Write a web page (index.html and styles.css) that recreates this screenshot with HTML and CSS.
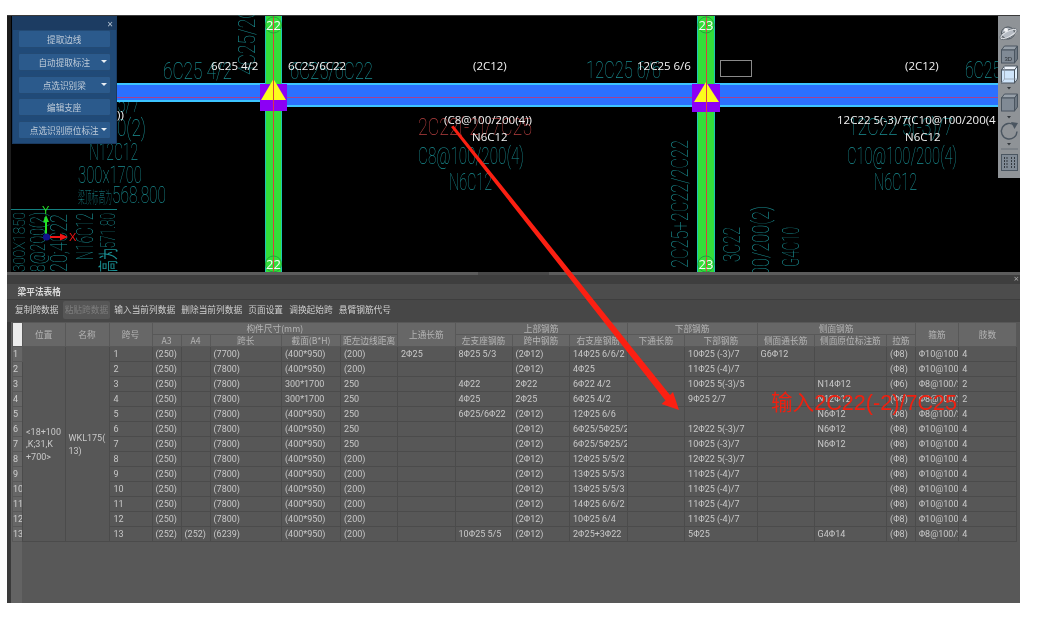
FILE: index.html
```html
<!DOCTYPE html>
<html lang="zh">
<head>
<meta charset="utf-8">
<title>梁平法表格</title>
<link rel="stylesheet" href="styles.css">
</head>
<body>
<div class="frame">
  <section class="canvas">
    <svg class="cad" viewBox="7 15 1013 257" width="1013" height="257" xmlns="http://www.w3.org/2000/svg">
      <rect x="7" y="15" width="1013" height="257" fill="#000"/>
      <rect x="7" y="15" width="1013" height="1" fill="#3a3a3a"/>
      <rect x="7" y="16" width="4" height="256" fill="#1c1c1c"/>

      <g class="teal">
        <text x="163" y="79" textLength="69" lengthAdjust="spacingAndGlyphs">6C25 4/2</text>
        <text x="290" y="79" textLength="83" lengthAdjust="spacingAndGlyphs">6C25/6C22</text>
        <text x="586" y="78" textLength="75" lengthAdjust="spacingAndGlyphs">12C25 6/6</text>
        <text x="965" y="78" textLength="36" lengthAdjust="spacingAndGlyphs">6C25</text>
        <text x="418" y="164" textLength="106" lengthAdjust="spacingAndGlyphs">C8@100/200(4)</text>
        <text x="449" y="190" textLength="43" lengthAdjust="spacingAndGlyphs">N6C12</text>
        <text x="848" y="135" textLength="105" lengthAdjust="spacingAndGlyphs">12C22 5(-3)/7</text>
        <text x="847" y="164" textLength="110" lengthAdjust="spacingAndGlyphs">C10@100/200(4)</text>
        <text x="874" y="190" textLength="43" lengthAdjust="spacingAndGlyphs">N6C12</text>
        <text x="117" y="112" textLength="23" lengthAdjust="spacingAndGlyphs">5/7</text>
        <text x="117" y="136" textLength="29" lengthAdjust="spacingAndGlyphs">0(2)</text>
        <text x="89" y="160" textLength="49" lengthAdjust="spacingAndGlyphs">N12C12</text>
        <text x="78" y="183" textLength="64" lengthAdjust="spacingAndGlyphs">300x1700</text>
        <text class="cn" x="78" y="203" textLength="34" lengthAdjust="spacingAndGlyphs">梁顶标高为</text>
        <text x="112" y="203" textLength="54" lengthAdjust="spacingAndGlyphs">568.800</text>
        <text transform="translate(255 75) rotate(-90)" textLength="66" lengthAdjust="spacingAndGlyphs">4C25/20</text>
        <text transform="translate(688 268) rotate(-90)" textLength="128" lengthAdjust="spacingAndGlyphs">2C25+2C22/2C22</text>
        <text transform="translate(740 262) rotate(-90)" textLength="35" lengthAdjust="spacingAndGlyphs">3C22</text>
        <text transform="translate(769 276) rotate(-90)" textLength="70" lengthAdjust="spacingAndGlyphs">00/200(2)</text>
        <text transform="translate(799 267) rotate(-90)" textLength="40" lengthAdjust="spacingAndGlyphs">G4C10</text>
        <text class="small" transform="translate(25 272) rotate(-90)" textLength="60" lengthAdjust="spacingAndGlyphs">300X1850</text>
        <text class="mid" transform="translate(45 272) rotate(-90)" textLength="60" lengthAdjust="spacingAndGlyphs">8@200(2)</text>
        <text transform="translate(67 272) rotate(-90)" textLength="58" lengthAdjust="spacingAndGlyphs">20;4C22</text>
        <text transform="translate(93 260) rotate(-90)" textLength="47" lengthAdjust="spacingAndGlyphs">N16C12</text>
        <text class="mid" transform="translate(115 272) rotate(-90)" textLength="59" lengthAdjust="spacingAndGlyphs">高为571.80</text>
      </g>
      <text class="brown" x="418" y="135" textLength="114" lengthAdjust="spacingAndGlyphs">2C22(-2)/7C25</text>
      <rect x="11" y="209" width="106" height="1" fill="#148080"/>

      <rect x="117" y="83" width="148" height="18" fill="#2b70ff"/>
      <rect x="282" y="83" width="716" height="24" fill="#2b70ff"/>
      <rect x="117" y="83" width="148" height="2" fill="#3cc4ff"/>
      <rect x="117" y="100" width="148" height="2" fill="#3cc4ff"/>
      <rect x="282" y="83" width="716" height="2" fill="#3cc4ff"/>
      <rect x="282" y="105" width="716" height="2" fill="#3cc4ff"/>
      <rect x="117" y="97" width="881" height="1" fill="#a8408f"/>

      <rect x="265" y="16" width="17" height="256" fill="#33dd3a"/>
      <rect x="697" y="16" width="18" height="256" fill="#33dd3a"/>
      <g fill="#1cc6b4">
        <rect x="265" y="16" width="1" height="256"/><rect x="281" y="16" width="1" height="256"/>
        <rect x="697" y="16" width="1" height="256"/><rect x="714" y="16" width="1" height="256"/>
      </g>
      <rect x="260" y="84" width="27" height="27" fill="#8c00f5"/>
      <rect x="692" y="84" width="28" height="28" fill="#8c00f5"/>
      <polygon points="273.5,79 286,100 261,100" fill="#fcfc1c"/>
      <polygon points="706,82 719,102 694,102" fill="#fcfc1c"/>
      <rect x="273" y="16" width="1" height="256" fill="#d94040"/>
      <rect x="706" y="16" width="1" height="256" fill="#d94040"/>

      <g fill="none" stroke="#1fa838">
        <circle cx="273.5" cy="25" r="8"/><circle cx="273.5" cy="264" r="8"/>
        <circle cx="706" cy="25" r="8"/><circle cx="706" cy="264" r="8"/>
      </g>
      <g class="num">
        <text x="273.5" y="30">22</text><text x="273.5" y="269">22</text>
        <text x="706" y="30">23</text><text x="706" y="269">23</text>
      </g>

      <rect x="720.500" y="60.500" width="31" height="16" fill="none" stroke="#8a8a8a"/>

      <g class="white">
        <text x="211" y="70">6C25 4/2</text>
        <text x="288" y="70">6C25/6C22</text>
        <text x="473" y="70">(2C12)</text>
        <text x="637" y="70">12C25 6/6</text>
        <text x="905" y="70">(2C12)</text>
        <text x="444" y="124">(C8@100/200(4))</text>
        <text x="472" y="141">N6C12</text>
        <text x="837" y="124">12C22 5(-3)/7(C10@100/200(4</text>
        <text x="905" y="141">N6C12</text>
        <text x="117" y="119">))</text>
      </g>

      <g class="axis">
        <rect x="45" y="221" width="2" height="16" fill="#24e024"/>
        <polygon points="46,215 43,222 49,222" fill="#24e024"/>
        <text x="42" y="214" fill="#24e024">Y</text>
        <rect x="46" y="236" width="16" height="2" fill="#f01414"/>
        <polygon points="68,237 60,233.500 60,240.500" fill="#f01414"/>
        <text x="69" y="241" fill="#f01414">X</text>
        <circle cx="46.500" cy="237" r="3.600" fill="#10108c"/>
      </g>
    </svg>

    <aside class="extract">
      <div class="extract-title"><span class="close">×</span></div>
      <button class="ebtn">提取边线</button>
      <button class="ebtn">自动提取标注<i class="caret"></i></button>
      <button class="ebtn">点选识别梁<i class="caret"></i></button>
      <button class="ebtn">编辑支座</button>
      <button class="ebtn">点选识别原位标注<i class="caret"></i></button>
    </aside>

    <aside class="viewbar">
      <svg width="22" height="162" viewBox="0 0 22 162" xmlns="http://www.w3.org/2000/svg">
        <!-- orbit sphere -->
        <ellipse cx="10" cy="17" rx="6.500" ry="6" fill="#b6bcc4" stroke="#4a525a"/>
        <ellipse cx="10.500" cy="18" rx="9" ry="3" fill="none" stroke="#dfe2e6" stroke-width="1.500" transform="rotate(-28 10.500 18)"/>
        <ellipse cx="10.500" cy="18" rx="9.600" ry="3.800" fill="none" stroke="#4a525a" stroke-width=".7" transform="rotate(-28 10.500 18)"/>
        <circle cx="8" cy="14" r="2" fill="#f2f4f6"/>
        <!-- 3D cube -->
        <path d="M3.500 34l3-4h13l-3 4z" fill="#98a1aa" stroke="#4a5560"/>
        <rect x="3.500" y="34" width="13" height="13" fill="#808a95" stroke="#4a5560"/>
        <path d="M16.500 34l3-4v13l-3 4z" fill="#6e7883" stroke="#4a5560"/>
        <text class="d3" x="6.500" y="45">3D</text>
        <!-- active cube -->
        <path d="M3.500 54l3-4h13l-3 4z" fill="#f2f8ff" stroke="#4a5560"/>
        <rect x="3.500" y="54" width="13" height="13" fill="#cfe5fb" stroke="#4a5560"/>
        <path d="M16.500 54l3-4v13l-3 4z" fill="#e2f0fd" stroke="#4a5560"/>
        <path d="M6.500 50v13l-3 4M6.500 63h13" fill="none" stroke="#8e9aa6" stroke-width=".7"/>
        <polygon points="9,71 13,71 11,73.500" fill="#33383d"/>
        <!-- shaded cube -->
        <path d="M3.500 82l3-4h13l-3 4z" fill="#98a1aa" stroke="#4a5560"/>
        <rect x="3.500" y="82" width="13" height="13" fill="#808a95" stroke="#4a5560"/>
        <path d="M16.500 82l3-4v13l-3 4z" fill="#6e7883" stroke="#4a5560"/>
        <polygon points="9,100 13,100 11,102.500" fill="#33383d"/>
        <!-- rotate -->
        <path d="M16.500 109.500a7.800 7.800 0 1 0 2.500 6" fill="none" stroke="#4a5560" stroke-width="1.400"/>
        <polygon points="13,106 20,107 16.500,113" fill="#4a5560"/>
        <polygon points="9,127 13,127 11,129.500" fill="#33383d"/>
        <rect x="3" y="132" width="17" height="2" fill="#7c8288"/>
        <!-- grid -->
        <rect x="3.500" y="138.500" width="16" height="16" fill="#808a95" stroke="#4a5560"/>
        <path d="M6.500 141v11M9 141v11M13.500 141v11M16.500 141v11" stroke="#33393f" stroke-dasharray="2 1" fill="none"/>
      </svg>
    </aside>
  </section>

  <section class="panel">
    <div class="splitter"><span class="grip"></span></div>
    <div class="panel-top"><span class="close close-dark">×</span></div>
    <h2 class="panel-title">梁平法表格</h2>
    <nav class="toolbar">
      <span class="tool">复制跨数据</span>
      <span class="tool tool-off">粘贴跨数据</span>
      <span class="tool">输入当前列数据</span>
      <span class="tool">删除当前列数据</span>
      <span class="tool">页面设置</span>
      <span class="tool">调换起始跨</span>
      <span class="tool">悬臂钢筋代号</span>
    </nav>
    <div class="grid-wrap">
      <table class="grid">
        <colgroup>
          <col class="c-no"><col class="c-pos"><col class="c-name"><col class="c-span"><col class="c-a"><col class="c-a">
          <col class="c-len"><col class="c-sec"><col class="c-dist"><col class="c-top"><col class="c-lft"><col class="c-mid">
          <col class="c-rgt"><col class="c-low"><col class="c-bot"><col class="c-sid"><col class="c-sdo"><col class="c-tie">
          <col class="c-stp"><col class="c-leg">
        </colgroup>
        <thead>
          <tr>
            <th class="corner" rowspan="2"></th><th rowspan="2">位置</th><th rowspan="2">名称</th><th rowspan="2">跨号</th>
            <th colspan="5">构件尺寸(mm)</th><th rowspan="2">上通长筋</th><th colspan="3">上部钢筋</th>
            <th colspan="2">下部钢筋</th><th colspan="3">侧面钢筋</th><th rowspan="2">箍筋</th><th rowspan="2">肢数</th>
          </tr>
          <tr>
            <th>A3</th><th>A4</th><th>跨长</th><th>截面(B*H)</th><th>距左边线距离</th>
            <th>左支座钢筋</th><th>跨中钢筋</th><th>右支座钢筋</th><th>下通长筋</th><th>下部钢筋</th>
            <th>侧面通长筋</th><th>侧面原位标注筋</th><th>拉筋</th>
          </tr>
        </thead>
        <tbody>
          <tr><th class="no">1</th><td class="merged" rowspan="13">&lt;18+100<br>,K;31,K<br>+700&gt;</td><td class="merged" rowspan="13">WKL175(<br>13)</td><td class="sp">1</td><td>(250)</td><td></td><td>(7700)</td><td>(400*950)</td><td>(200)</td><td>2Φ25</td><td>8Φ25 5/3</td><td>(2Φ12)</td><td>14Φ25 6/6/2</td><td></td><td>10Φ25 (-3)/7</td><td>G6Φ12</td><td></td><td>(Φ8)</td><td>Φ10@100/200(4)</td><td>4</td></tr>
          <tr><th class="no">2</th><td class="sp">2</td><td>(250)</td><td></td><td>(7800)</td><td>(400*950)</td><td>(200)</td><td></td><td></td><td>(2Φ12)</td><td>4Φ25</td><td></td><td>11Φ25 (-4)/7</td><td></td><td></td><td>(Φ8)</td><td>Φ10@100/200(4)</td><td>4</td></tr>
          <tr><th class="no">3</th><td class="sp">3</td><td>(250)</td><td></td><td>(7800)</td><td>300*1700</td><td>250</td><td></td><td>4Φ22</td><td>2Φ22</td><td>6Φ22 4/2</td><td></td><td>10Φ25 5(-3)/5</td><td></td><td>N14Φ12</td><td>(Φ6)</td><td>Φ8@100/200(2)</td><td>2</td></tr>
          <tr><th class="no">4</th><td class="sp">4</td><td>(250)</td><td></td><td>(7800)</td><td>300*1700</td><td>250</td><td></td><td>4Φ25</td><td>2Φ25</td><td>6Φ25 4/2</td><td></td><td>9Φ25 2/7</td><td></td><td>N12Φ12</td><td>(Φ6)</td><td>Φ8@100/200(2)</td><td>2</td></tr>
          <tr><th class="no">5</th><td class="sp">5</td><td>(250)</td><td></td><td>(7800)</td><td>(400*950)</td><td>250</td><td></td><td>6Φ25/6Φ22</td><td>(2Φ12)</td><td>12Φ25 6/6</td><td></td><td></td><td></td><td>N6Φ12</td><td>(Φ8)</td><td>Φ8@100/200(4)</td><td>4</td></tr>
          <tr><th class="no">6</th><td class="sp">6</td><td>(250)</td><td></td><td>(7800)</td><td>(400*950)</td><td>250</td><td></td><td></td><td>(2Φ12)</td><td>6Φ25/5Φ25/2</td><td></td><td>12Φ22 5(-3)/7</td><td></td><td>N6Φ12</td><td>(Φ8)</td><td>Φ10@100/200(4)</td><td>4</td></tr>
          <tr><th class="no">7</th><td class="sp">7</td><td>(250)</td><td></td><td>(7800)</td><td>(400*950)</td><td>250</td><td></td><td></td><td>(2Φ12)</td><td>6Φ25/5Φ25/2</td><td></td><td>10Φ25 (-3)/7</td><td></td><td>N6Φ12</td><td>(Φ8)</td><td>Φ10@100/200(4)</td><td>4</td></tr>
          <tr><th class="no">8</th><td class="sp">8</td><td>(250)</td><td></td><td>(7800)</td><td>(400*950)</td><td>(200)</td><td></td><td></td><td>(2Φ12)</td><td>12Φ25 5/5/2</td><td></td><td>12Φ22 5(-3)/7</td><td></td><td></td><td>(Φ8)</td><td>Φ10@100/200(4)</td><td>4</td></tr>
          <tr><th class="no">9</th><td class="sp">9</td><td>(250)</td><td></td><td>(7800)</td><td>(400*950)</td><td>(200)</td><td></td><td></td><td>(2Φ12)</td><td>13Φ25 5/5/3</td><td></td><td>11Φ25 (-4)/7</td><td></td><td></td><td>(Φ8)</td><td>Φ10@100/200(4)</td><td>4</td></tr>
          <tr><th class="no">10</th><td class="sp">10</td><td>(250)</td><td></td><td>(7800)</td><td>(400*950)</td><td>(200)</td><td></td><td></td><td>(2Φ12)</td><td>13Φ25 5/5/3</td><td></td><td>11Φ25 (-4)/7</td><td></td><td></td><td>(Φ8)</td><td>Φ10@100/200(4)</td><td>4</td></tr>
          <tr><th class="no">11</th><td class="sp">11</td><td>(250)</td><td></td><td>(7800)</td><td>(400*950)</td><td>(200)</td><td></td><td></td><td>(2Φ12)</td><td>14Φ25 6/6/2</td><td></td><td>11Φ25 (-4)/7</td><td></td><td></td><td>(Φ8)</td><td>Φ10@100/200(4)</td><td>4</td></tr>
          <tr><th class="no">12</th><td class="sp">12</td><td>(250)</td><td></td><td>(7800)</td><td>(400*950)</td><td>(200)</td><td></td><td></td><td>(2Φ12)</td><td>10Φ25 6/4</td><td></td><td>11Φ25 (-4)/7</td><td></td><td></td><td>(Φ8)</td><td>Φ10@100/200(4)</td><td>4</td></tr>
          <tr><th class="no">13</th><td class="sp">13</td><td>(252)</td><td>(252)</td><td>(6239)</td><td>(400*950)</td><td>(200)</td><td></td><td>10Φ25 5/5</td><td>(2Φ12)</td><td>2Φ25+3Φ22</td><td></td><td>5Φ25</td><td></td><td>G4Φ14</td><td>(Φ8)</td><td>Φ8@100/200(4)</td><td>4</td></tr>
        </tbody>
      </table>
    </div>
  </section>

  <svg class="arrow" width="240" height="290" viewBox="445 125 240 290" xmlns="http://www.w3.org/2000/svg">
    <polygon points="451,127 453.500,125.500 670,395 673,392 679,410 661.500,404 665.500,400.500" fill="#fb2012"/>
  </svg>
  <p class="note">输入2C22(-2)/7C25</p>
</div>
</body>
</html>
```

FILE: styles.css
```css
* { box-sizing: border-box; }

html, body { margin: 0; background: #fff; }

body {
  width: 1062px;
  height: 623px;
  padding: 15px 0 0 7px;
  overflow: hidden;
  font-family: "Open Sans", "Noto Sans CJK SC", sans-serif;
}

.frame {
  position: relative;
  width: 1013px;
  height: 588px;
  display: flex;
  flex-direction: column;
  filter: blur(0.3px);
}

/* CAD canvas */
.canvas { position: relative; height: 257px; flex: none; overflow: hidden; background: #000; }
.cad { display: block; }

.teal text, .brown {
  font-family: Roboto, "Liberation Sans", sans-serif;
  font-weight: 100;
  font-size: 24px;
}
.teal { fill: #1a9094; }
.teal .cn { font-family: "Noto Sans CJK SC", sans-serif; font-size: 16px; }
.teal .small { font-size: 16px; }
.teal .mid { font-size: 20px; }
.brown { fill: #b84040; }

.white text {
  font-family: "Open Sans", sans-serif;
  font-size: 11.5px;
  fill: #f2f2f2;
}
.num text {
  font-family: "Open Sans", sans-serif;
  font-size: 13px;
  fill: #f4fff4;
  text-anchor: middle;
}
.axis text { font-family: "Liberation Sans", sans-serif; font-size: 11px; }
.d3 { font-family: "Liberation Sans", sans-serif; font-size: 6px; fill: #2c3136; }

/* extract panel */
.extract {
  position: absolute;
  left: 4.5px;
  top: 1px;
  width: 105.5px;
  height: 128px;
  padding: 0 5px;
  display: flex;
  flex-direction: column;
  gap: 4.7px;
  background: #204a78;
  border: 1px solid #1a3a60;
}
.extract-title {
  height: 13px;
  margin: 0 -5px -4.500px;
  padding-right: 3px;
  background: #1c3c62;
  display: flex;
  justify-content: flex-end;
  align-items: center;
}
.close { font-size: 10px; line-height: 10px; color: #b9c6d4; }
.ebtn {
  position: relative;
  height: 18px;
  flex: none;
  padding: 0;
  font: 8.6px/16px "Noto Sans CJK SC", sans-serif;
  color: #bfcbd8;
  text-align: center;
  background: #2b5a8c;
  border: 1px solid #234a74;
  border-radius: 2px;
}
.caret {
  position: absolute;
  right: 3px;
  top: 6px;
  border: 3px solid transparent;
  border-top: 3px solid #e8eef4;
  border-bottom: 0;
}

.viewbar {
  position: absolute;
  right: 0;
  top: 1px;
  width: 22px;
  height: 162px;
  background: #8f9397;
}
.viewbar svg { display: block; }

/* lower panel */
.panel { flex: 1; min-height: 0; display: flex; flex-direction: column; background: #585858; color: #c8c8c8; font-size: 9px; }

.splitter { height: 3px; flex: none; background: #5c5c5c; display: flex; justify-content: center; }
.grip { width: 71px; height: 3px; background: #484848; }

.panel-top { height: 9px; flex: none; background: #3e3e3e; display: flex; justify-content: flex-end; padding-right: 1px; }
.close-dark { color: #aaa; margin-top: -1px; font-size: 9px; }

.panel-title {
  height: 15px;
  flex: none;
  margin: 0;
  padding-left: 10.5px;
  font: 700 8.7px/15px "Noto Sans CJK SC", sans-serif;
  color: #dcdcdc;
  background: #4c4c4c;
}

.toolbar {
  height: 23px;
  flex: none;
  display: flex;
  align-items: center;
  gap: 6.2px;
  padding: 0 0 2px 8px;
  background: #474747;
  border-top: 1px solid #3e3e3e;
}
.tool { font: 8.7px/18px "Noto Sans CJK SC", sans-serif; color: #d0d0d0; white-space: nowrap; }
.tool-off { padding: 0 2px; margin: 0 -2px; color: #7e7e7e; background: #565656; border-radius: 2px; }

.grid-wrap {
  flex: 1;
  min-height: 0;
  overflow: hidden;
  padding-left: 1px;
  border-left: 4px solid #3a3a3a;
  background: linear-gradient(#636363, #636363) 0 0 / 11px 100% no-repeat #585858;
}

.grid {
  table-layout: fixed;
  width: 1004px;
  border-collapse: collapse;
  font: 9px Roboto, "Noto Sans CJK SC", sans-serif;
}

.c-no { width: 10px; } .c-pos { width: 42.5px; } .c-name { width: 44px; } .c-span { width: 43px; }
.c-a { width: 29px; } .c-len { width: 71.5px; } .c-sec { width: 59px; } .c-dist { width: 57px; }
.c-top { width: 57.5px; } .c-lft { width: 57px; } .c-mid { width: 57.5px; } .c-rgt { width: 57.5px; }
.c-low { width: 57.5px; } .c-bot { width: 72.5px; } .c-sid { width: 57px; } .c-sdo { width: 72.500px; }
.c-tie { width: 28.5px; } .c-stp { width: 43.5px; } .c-leg { width: 57.5px; }

.grid thead th {
  height: 11.800px;
  padding: 0;
  overflow: hidden;
  white-space: nowrap;
  font: 400 8.7px/11px "Noto Sans CJK SC", Roboto, sans-serif;
  color: #b4b4b4;
  text-align: center;
  background: #676767;
  border: 1px solid #585858;
}
.grid thead .corner { background: #ececec; }

.grid tbody tr { height: 14.92px; }
.grid td, .grid .no {
  height: 14.92px;
  padding: 1px 0 0 3px;
  overflow: hidden;
  white-space: nowrap;
  line-height: 13px;
  color: #c8c8c8;
  background: #575757;
  border: 1px solid #4b4b4b;
}
.grid .no {
  padding: 1px 0 0 0;
  font-weight: 400;
  text-align: left;
  color: #cfcfcf;
  background: #666;
  border-color: #585858;
}
.grid .sp { padding-left: 4px; }
.grid .merged { white-space: normal; line-height: 12.500px; }

/* annotation over everything */
.arrow { position: absolute; left: 438px; top: 110px; }
.note {
  position: absolute;
  left: 764px;
  top: 374px;
  margin: 0;
  white-space: nowrap;
  font: 21.6px/28px "Liberation Sans", "Noto Sans CJK SC", sans-serif;
  color: #ee2010;
}
```
